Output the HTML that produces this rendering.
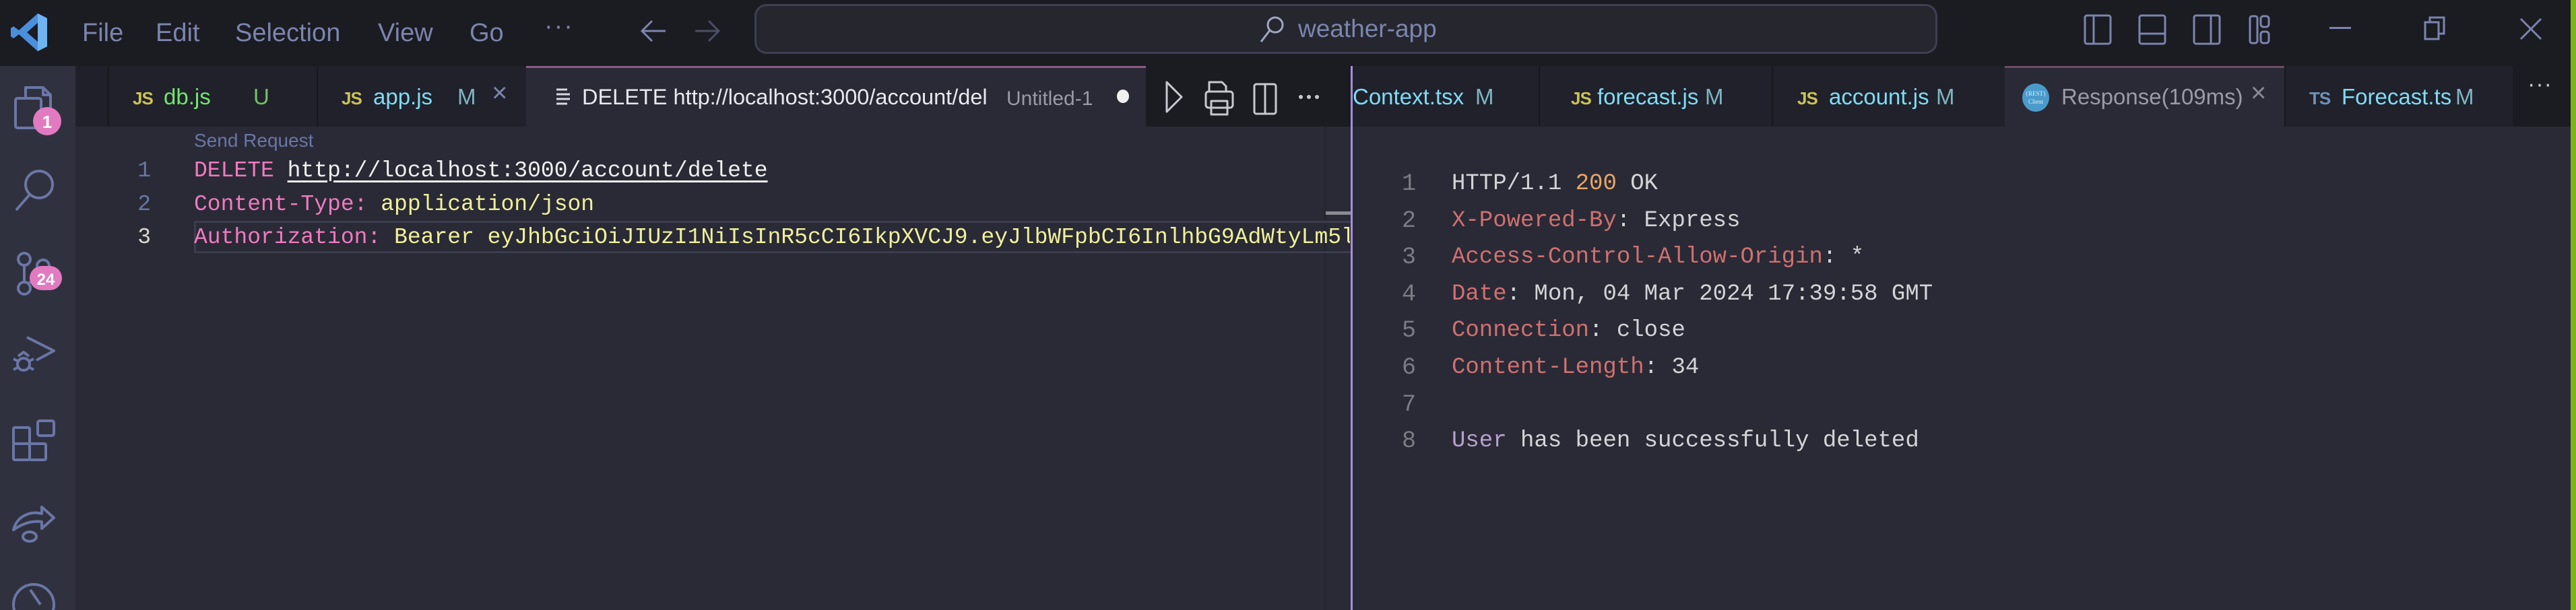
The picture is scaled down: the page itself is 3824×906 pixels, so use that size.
<!DOCTYPE html>
<html><head><meta charset="utf-8"><style>
*{margin:0;padding:0;box-sizing:border-box}
body{width:3824px;height:906px;overflow:hidden;background:#292a35;position:relative;font-family:"Liberation Sans",sans-serif}
.a{position:absolute;white-space:nowrap}
.ui{font-family:"Liberation Sans",sans-serif}
.mono{font-family:"Liberation Mono",monospace}
.menu{top:26px;font-size:38px;color:#7b85ad;line-height:46px}
.tab{top:98px;height:90px}
.tt{top:122px;font-size:33px;line-height:44px}
.js{font-weight:bold;color:#cbc255;font-size:26px;top:132px;line-height:28px;letter-spacing:-1px}
</style></head><body>
<!-- title bar -->
<div class="a" style="left:0;top:0;width:3824px;height:98px;background:#1b1b22"></div>
<svg class="a" style="left:16px;top:18px" width="56" height="60" viewBox="0 0 56 60"><path d="M40 2 L54 9 V51 L40 58 L12 33 L4 39 L0 36 V24 L4 21 L12 27 Z M40 16 L24 30 L40 44 Z" fill="#4a8fdc"/><path d="M40 2 L54 9 V51 L40 58 Z" fill="#6fb3f0"/></svg>
<div class="a menu" style="left:122px">File</div>
<div class="a menu" style="left:231px">Edit</div>
<div class="a menu" style="left:349px">Selection</div>
<div class="a menu" style="left:561px">View</div>
<div class="a menu" style="left:697px">Go</div>
<div class="a menu" style="left:808px;top:16px;letter-spacing:2px">···</div>
<svg class="a" style="left:950px;top:28px" width="40" height="36" viewBox="0 0 40 36"><path d="M38 18H4M18 3L3 18L18 33" stroke="#7b85ad" stroke-width="3" fill="none"/></svg>
<svg class="a" style="left:1030px;top:28px" width="40" height="36" viewBox="0 0 40 36"><path d="M2 18H36M22 3L37 18L22 33" stroke="#4a4f66" stroke-width="3" fill="none"/></svg>
<div class="a" style="left:1120px;top:6px;width:1756px;height:74px;background:#25262e;border:3px solid #3d4052;border-radius:18px"></div>
<svg class="a" style="left:1868px;top:22px" width="40" height="44" viewBox="0 0 40 44"><circle cx="25" cy="15" r="11" stroke="#9fa6c0" stroke-width="3" fill="none"/><path d="M17 23L4 40" stroke="#9fa6c0" stroke-width="3"/></svg>
<div class="a ui" style="left:1927px;top:20px;font-size:37px;color:#7b85ad;line-height:46px">weather-app</div>
<svg class="a" style="left:3092px;top:20px" width="340" height="48" viewBox="0 0 340 48">
<g stroke="#7b85ad" stroke-width="3" fill="none"><rect x="3" y="3" width="38" height="42" rx="3"/><path d="M16 3V45"/>
<rect x="84" y="3" width="38" height="42" rx="3"/><path d="M84 30H122"/>
<rect x="165" y="3" width="38" height="42" rx="3"/><path d="M190 3V45"/>
<rect x="248" y="4" width="11" height="40" rx="3"/><rect x="264" y="4" width="12" height="16" rx="4"/><rect x="264" y="27" width="12" height="17" rx="4"/></g></svg>
<div class="a" style="left:3458px;top:40px;width:32px;height:3px;background:#7b85ad"></div>
<svg class="a" style="left:3598px;top:24px" width="34" height="36" viewBox="0 0 34 36"><g stroke="#7b85ad" stroke-width="3" fill="none"><rect x="2" y="9" width="20" height="25"/><path d="M9 9V2H30V26H22"/></g></svg>
<svg class="a" style="left:3740px;top:26px" width="34" height="34" viewBox="0 0 34 34"><path d="M2 2L32 32M32 2L2 32" stroke="#7b85ad" stroke-width="3"/></svg>

<!-- activity bar -->
<div class="a" style="left:0;top:98px;width:112px;height:808px;background:#30313f"></div>
<svg class="a" style="left:0;top:98px" width="112" height="808" viewBox="0 0 112 808"><g stroke="#6a76a6" stroke-width="4" fill="none" stroke-linejoin="round">
<path d="M38 48V32H64L75 43V76H62"/><path d="M64 32V43H75"/><rect x="23" y="48" width="38" height="44" rx="3"/>
<circle cx="58" cy="176" r="20"/><path d="M44 191L24 214"/>
<circle cx="36" cy="287" r="9"/><circle cx="64" cy="297" r="9"/><circle cx="36" cy="330" r="9"/><path d="M36 296V321M64 306C64 318 48 318 40 324"/>
<g transform="translate(0,25)"><path d="M40 378L80 398L54 412"/><circle cx="35" cy="418" r="9"/><path d="M20 410L28 414M20 426L28 422M50 410L42 414M50 426L42 422M27 406L35 400L43 406"/></g>
<g transform="translate(0,48)"><rect x="20" y="489" width="24" height="24" rx="2"/><rect x="44" y="513" width="24" height="24" rx="2"/><rect x="20" y="513" width="24" height="24" rx="2"/><rect x="56" y="479" width="24" height="22" rx="3"/></g>
<g transform="translate(0,71)"><path d="M20 618C26 594 50 590 62 594V584L80 600L62 616V606C48 604 34 608 20 618Z"/><ellipse cx="44" cy="628" rx="10" ry="7"/></g>
<circle cx="50" cy="800" r="30"/><path d="M45 778L60 800"/></g>
<circle cx="70" cy="82" r="21" fill="#e17ac0"/><text x="70" y="92" fill="#fff" font-size="26" font-weight="bold" text-anchor="middle" font-family="Liberation Sans">1</text>
<rect x="44" y="297" width="48" height="36" rx="18" fill="#e17ac0"/><text x="68" y="325" fill="#fff" font-size="24" font-weight="bold" text-anchor="middle" font-family="Liberation Sans">24</text>
</svg>

<!-- left tabs -->
<div class="a tab" style="left:112px;width:48px;background:#1f2029"></div>
<div class="a tab" style="left:160px;width:310px;background:#20212b;border-left:2px solid #17171d"></div>
<div class="a tab" style="left:470px;width:311px;background:#20212b;border-left:2px solid #17171d"></div>
<div class="a tab" style="left:781px;width:920px;background:#292a35;border-top:3px solid #8a5c86"></div>
<div class="a tab" style="left:1701px;width:304px;background:#1b1b22"></div>
<div class="a js" style="left:197px">JS</div><div class="a tt" style="left:243px;color:#73e66e">db.js</div><div class="a tt" style="left:376px;color:#73c264">U</div>
<div class="a js" style="left:507px">JS</div><div class="a tt" style="left:554px;color:#7fdcf5">app.js</div><div class="a tt" style="left:679px;color:#7fb5c2">M</div><div class="a tt" style="left:730px;color:#7b85ad;font-size:40px;top:116px">×</div>
<svg class="a" style="left:826px;top:130px" width="22" height="26" viewBox="0 0 22 26"><path d="M0 3H16M0 10H20M0 17H20M0 24H16" stroke="#d8d8e0" stroke-width="3"/></svg>
<div class="a tt" style="left:864px;color:#e8e8ef;font-size:32.5px">DELETE http://localhost:3000/account/del</div>
<div class="a tt" style="left:1494px;color:#9a9aa8;font-size:30px;top:125px">Untitled-1</div>
<div class="a" style="left:1658px;top:133px;width:18px;height:20px;border-radius:50%;background:#f0f0f0"></div>
<svg class="a" style="left:1720px;top:112px" width="260" height="66" viewBox="0 0 260 66"><g stroke="#c8c8d0" stroke-width="3" fill="none" stroke-linejoin="round">
<path d="M12 10L34 32L12 54Z"/>
<path d="M75 24V10H94L100 16V24"/><rect x="70" y="24" width="40" height="24" rx="4"/><rect x="78" y="38" width="24" height="20"/>
<rect x="142" y="13" width="32" height="44" rx="3"/><path d="M158 13V57"/></g>
<g fill="#c8c8d0"><circle cx="211" cy="32" r="3"/><circle cx="223" cy="32" r="3"/><circle cx="235" cy="32" r="3"/></g></svg>

<!-- right tabs -->
<div class="a" style="left:2005px;top:98px;width:3px;height:808px;background:#a68ee0"></div>
<div class="a tab" style="left:2008px;width:276px;background:#20212b"></div>
<div class="a tab" style="left:2284px;width:346px;background:#20212b;border-left:2px solid #17171d"></div>
<div class="a tab" style="left:2630px;width:346px;background:#20212b;border-left:2px solid #17171d"></div>
<div class="a tab" style="left:2976px;width:415px;background:#292a35;border-top:3px solid #6c4c6a"></div>
<div class="a tab" style="left:3391px;width:339px;background:#20212b;border-left:2px solid #17171d"></div>
<div class="a tab" style="left:3730px;width:86px;background:#1b1b22"></div>
<div class="a tt" style="left:2008px;color:#7fdcf5">Context.tsx</div><div class="a tt" style="left:2190px;color:#7fb5c2">M</div>
<div class="a js" style="left:2332px">JS</div><div class="a tt" style="left:2371px;color:#7fdcf5">forecast.js</div><div class="a tt" style="left:2531px;color:#7fb5c2">M</div>
<div class="a js" style="left:2668px">JS</div><div class="a tt" style="left:2715px;color:#7fdcf5">account.js</div><div class="a tt" style="left:2874px;color:#7fb5c2">M</div>
<div class="a" style="left:3002px;top:124px;width:40px;height:42px;border-radius:50%;background:#4a9bcb;color:#e0f0ff;font-size:9px;font-family:'Liberation Serif',serif;text-align:center;line-height:12px;padding-top:9px">{REST}<br>Client</div>
<div class="a tt" style="left:3060px;color:#9a9aa8">Response(109ms)</div><div class="a tt" style="left:3341px;color:#8a8a96;font-size:40px;top:116px">×</div>
<div class="a js" style="left:3428px;color:#6e92b8">TS</div><div class="a tt" style="left:3476px;color:#7fdcf5">Forecast.ts</div><div class="a tt" style="left:3645px;color:#7fb5c2">M</div>
<div class="a" style="left:3752px;top:106px;color:#c8c8d0;font-size:34px;letter-spacing:1px">···</div>
<div class="a" style="left:3816px;top:0;width:8px;height:906px;background:#7cb518"></div>

<!-- left editor -->
<div class="a ui" style="left:288px;top:192px;font-size:28px;color:#6a76a6;line-height:34px">Send Request</div>
<div class="a" style="left:1966px;top:188px;width:2px;height:718px;background:#22232c"></div>
<div class="a" style="left:288px;top:328px;width:1717px;height:48px;border:3px solid #3b3d4c;border-right:none"></div>
<div class="a" style="left:1968px;top:314px;width:37px;height:5px;background:#8a8a94"></div>
<div class="a mono" style="left:200px;top:229px;font-size:33px;line-height:49.5px;color:#6a76a6;text-align:right;width:24px">1<br>2<br><span style="color:#d8d8d0">3</span></div>
<div class="a mono" style="left:288px;top:229px;width:1716px;overflow:hidden;font-size:33px;line-height:49.5px;color:#f07ac0">DELETE <span style="color:#f0f0f0;text-decoration:underline;text-underline-offset:6px;text-decoration-thickness:3px">http://localhost:3000/account/delete</span><br>Content-Type: <span style="color:#f0f09a">application/json</span><br>Authorization: <span style="color:#f0f09a">Bearer eyJhbGciOiJIUzI1NiIsInR5cCI6IkpXVCJ9.eyJlbWFpbCI6InlhbG9AdWtyLm5ldCIsImlhdCI6MTcw</span></div>

<!-- right editor -->
<div class="a mono" style="left:2072px;top:246px;font-size:35px;line-height:54.6px;color:#7c7c86;text-align:right;width:30px">1<br>2<br>3<br>4<br>5<br>6<br>7<br>8</div>
<div class="a mono" style="left:2155px;top:246px;font-size:34px;line-height:54.6px;color:#d4d4d8;letter-spacing:0">HTTP/1.1 <span style="color:#e8a66a">200</span> OK<br><span style="color:#d07070">X-Powered-By</span>: Express<br><span style="color:#d07070">Access-Control-Allow-Origin</span>: *<br><span style="color:#d07070">Date</span>: Mon, 04 Mar 2024 17:39:58 GMT<br><span style="color:#d07070">Connection</span>: close<br><span style="color:#d07070">Content-Length</span>: 34<br>&nbsp;<br><span style="color:#b8a0d0">User</span> has been successfully deleted</div>
</body></html>
